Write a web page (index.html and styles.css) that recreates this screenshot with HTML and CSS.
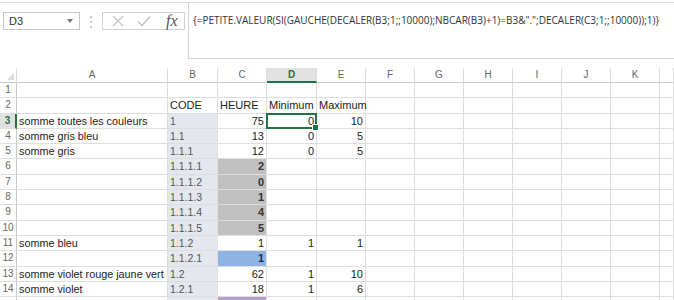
FILE: index.html
```html
<!DOCTYPE html>
<html lang="fr">
<head>
<meta charset="utf-8">
<link rel="stylesheet" href="styles.css">
</head>
<body>
<div class="topbar">
  <div class="namebox"><span>D3</span><span class="arrow"></span></div>
  <div class="dots"><i></i><i></i><i></i></div>
  <div class="buttons">
    <svg class="ico" width="12" height="12" viewBox="0 0 12 12"><path d="M1 1L11 11M11 1L1 11" stroke="#c4c4c4" stroke-width="1.3" fill="none"/></svg>
    <svg class="ico" width="14" height="12" viewBox="0 0 14 12"><path d="M1 6.5L5 10.5L13 1.5" stroke="#c4c4c4" stroke-width="1.6" fill="none"/></svg>
    <span class="fx">fx</span>
  </div>
  <div class="formula">{=PETITE.VALEUR(SI(GAUCHE(DECALER(B3;1;;10000);NBCAR(B3)+1)=B3&amp;".";DECALER(C3;1;;10000));1)}</div>
</div>
<div class="sheet">
  <div class="hd corner"></div><div class="hd">A</div><div class="hd">B</div><div class="hd">C</div><div class="hd sel">D</div><div class="hd">E</div><div class="hd">F</div><div class="hd">G</div><div class="hd">H</div><div class="hd">I</div><div class="hd">J</div><div class="hd">K</div><div class="hd"></div>

  <div class="rh">1</div><div class="c"></div><div class="c"></div><div class="c"></div><div class="c"></div><div class="c"></div><div class="c"></div><div class="c"></div><div class="c"></div><div class="c"></div><div class="c"></div><div class="c"></div><div class="c"></div>

  <div class="rh">2</div><div class="c"></div><div class="c">CODE</div><div class="c">HEURE</div><div class="c">Minimum</div><div class="c">Maximum</div><div class="c"></div><div class="c"></div><div class="c"></div><div class="c"></div><div class="c"></div><div class="c"></div><div class="c"></div>

  <div class="rh sel">3</div><div class="c">somme toutes les couleurs</div><div class="c code">1</div><div class="c n">75</div><div class="c n active">0</div><div class="c n">10</div><div class="c"></div><div class="c"></div><div class="c"></div><div class="c"></div><div class="c"></div><div class="c"></div><div class="c"></div>

  <div class="rh">4</div><div class="c">somme gris bleu</div><div class="c code">1.1</div><div class="c n">13</div><div class="c n">0</div><div class="c n">5</div><div class="c"></div><div class="c"></div><div class="c"></div><div class="c"></div><div class="c"></div><div class="c"></div><div class="c"></div>

  <div class="rh">5</div><div class="c">somme gris</div><div class="c code">1.1.1</div><div class="c n">12</div><div class="c n">0</div><div class="c n">5</div><div class="c"></div><div class="c"></div><div class="c"></div><div class="c"></div><div class="c"></div><div class="c"></div><div class="c"></div>

  <div class="rh">6</div><div class="c"></div><div class="c code">1.1.1.1</div><div class="c n gray">2</div><div class="c"></div><div class="c"></div><div class="c"></div><div class="c"></div><div class="c"></div><div class="c"></div><div class="c"></div><div class="c"></div><div class="c"></div>

  <div class="rh">7</div><div class="c"></div><div class="c code">1.1.1.2</div><div class="c n gray">0</div><div class="c"></div><div class="c"></div><div class="c"></div><div class="c"></div><div class="c"></div><div class="c"></div><div class="c"></div><div class="c"></div><div class="c"></div>

  <div class="rh">8</div><div class="c"></div><div class="c code">1.1.1.3</div><div class="c n gray">1</div><div class="c"></div><div class="c"></div><div class="c"></div><div class="c"></div><div class="c"></div><div class="c"></div><div class="c"></div><div class="c"></div><div class="c"></div>

  <div class="rh">9</div><div class="c"></div><div class="c code">1.1.1.4</div><div class="c n gray">4</div><div class="c"></div><div class="c"></div><div class="c"></div><div class="c"></div><div class="c"></div><div class="c"></div><div class="c"></div><div class="c"></div><div class="c"></div>

  <div class="rh">10</div><div class="c"></div><div class="c code">1.1.1.5</div><div class="c n gray">5</div><div class="c"></div><div class="c"></div><div class="c"></div><div class="c"></div><div class="c"></div><div class="c"></div><div class="c"></div><div class="c"></div><div class="c"></div>

  <div class="rh">11</div><div class="c">somme bleu</div><div class="c code">1.1.2</div><div class="c n">1</div><div class="c n">1</div><div class="c n">1</div><div class="c"></div><div class="c"></div><div class="c"></div><div class="c"></div><div class="c"></div><div class="c"></div><div class="c"></div>

  <div class="rh">12</div><div class="c"></div><div class="c code">1.1.2.1</div><div class="c n blue">1</div><div class="c"></div><div class="c"></div><div class="c"></div><div class="c"></div><div class="c"></div><div class="c"></div><div class="c"></div><div class="c"></div><div class="c"></div>

  <div class="rh">13</div><div class="c">somme violet rouge jaune vert</div><div class="c code">1.2</div><div class="c n">62</div><div class="c n">1</div><div class="c n">10</div><div class="c"></div><div class="c"></div><div class="c"></div><div class="c"></div><div class="c"></div><div class="c"></div><div class="c"></div>

  <div class="rh">14</div><div class="c">somme violet</div><div class="c code">1.2.1</div><div class="c n">18</div><div class="c n">1</div><div class="c n">6</div><div class="c"></div><div class="c"></div><div class="c"></div><div class="c"></div><div class="c"></div><div class="c"></div><div class="c"></div>

  <div class="rh"></div><div class="c"></div><div class="c code"></div><div class="c n purple"></div><div class="c"></div><div class="c"></div><div class="c"></div><div class="c"></div><div class="c"></div><div class="c"></div><div class="c"></div><div class="c"></div><div class="c"></div>
</div>
</body>
</html>
```

FILE: styles.css
```css
html, body {
  margin: 0;
  padding: 0;
  background: #fff;
  overflow: hidden;
  width: 674px;
  height: 300px;
}
body {
  font-family: "Liberation Sans", Arial, sans-serif;
  color: #222;
}
.topbar {
  margin-top: 2px;
  border-top: 1px solid #dadada;
  height: 57px;
  display: flex;
  align-items: flex-start;
}
.namebox {
  margin: 9px 0 0 3px;
  width: 77px;
  height: 18px;
  box-sizing: border-box;
  border: 1px solid #c8c8c8;
  display: flex;
  align-items: center;
  justify-content: space-between;
  padding: 0 6px 0 5px;
  font-size: 11px;
  color: #333;
}
.arrow {
  width: 0;
  height: 0;
  border-left: 3px solid transparent;
  border-right: 3px solid transparent;
  border-top: 4px solid #777;
}
.dots {
  margin: 13px 0 0 10px;
  width: 3px;
  display: flex;
  flex-direction: column;
  gap: 3px;
}
.dots i {
  display: block;
  width: 2px;
  height: 2px;
  background: #c9c9c9;
}
.buttons {
  margin: 9px 0 0 9px;
  width: 83px;
  height: 18px;
  box-sizing: border-box;
  border: 1px solid #d0d0d0;
  display: flex;
  align-items: center;
  padding: 0 0 0 9px;
  gap: 13px;
}
.fx {
  font-family: "Liberation Serif", serif;
  font-style: italic;
  font-size: 16px;
  color: #555;
  margin-left: 2px;
  line-height: 1;
}
.formula {
  margin-left: 3px;
  flex: 1;
  height: 56px;
  border-left: 1px solid #d2d2d2;
  border-bottom: 1px solid #d2d2d2;
  padding: 10px 0 0 4px;
  box-sizing: border-box;
  font-family: "Open Sans", sans-serif;
  font-size: 10px;
  color: #333;
  white-space: nowrap;
  overflow: hidden;
}
.sheet {
  margin-top: 8px;
  display: grid;
  grid-template-columns: 17px 151px 50px 49px 50px 49px 49px 49px 49px 49px 49px 49px 14px;
  grid-template-rows: 15px;
  grid-auto-rows: 15.3px;
  font-size: 11px;
}
.sheet > div {
  box-sizing: border-box;
  border-right: 1px solid #dedede;
  border-bottom: 1px solid #dedede;
  white-space: nowrap;
  line-height: 14px;
  overflow: visible;
}
.hd {
  text-align: center;
  color: #666;
  font-size: 10px;
  border-bottom-color: #c8c8c8 !important;
}
.hd.sel {
  background: #e1e1e1;
  color: #217346;
  font-weight: bold;
  border-bottom: 2px solid #217346 !important;
}
.corner {
  position: relative;
}
.corner::after {
  content: "";
  position: absolute;
  right: 2px;
  bottom: 2px;
  border-left: 7px solid transparent;
  border-bottom: 7px solid #dcdcdc;
}
.rh {
  text-align: center;
  color: #666;
  font-size: 10px;
  border-right-color: #c8c8c8 !important;
}
.rh.sel {
  background: #e1e1e1;
  color: #217346;
  font-weight: bold;
  border-right: 2px solid #217346 !important;
}
.c {
  padding: 0 2px;
  position: relative;
}
.c.n {
  text-align: right;
}
.label {
  letter-spacing: -0.1px;
}
.code {
  background: #e4e8ee;
  color: #555;
  font-size: 10.5px;
}
.gray {
  background: #c0c0c0;
  font-weight: bold;
  color: #333;
}
.blue {
  background: #8db4e2;
  font-weight: bold;
  color: #1f2f4a;
}
.purple {
  background: #b1a0c7;
}
.active {
  z-index: 1;
}
.active::before {
  content: "";
  position: absolute;
  left: -1px;
  top: -1px;
  right: -1px;
  bottom: -1px;
  border: 2px solid #217346;
}
.active::after {
  content: "";
  position: absolute;
  right: -3px;
  bottom: -3px;
  width: 5px;
  height: 5px;
  background: #217346;
  border: 1px solid #fff;
}
.sheet > .c:nth-child(13n+2) {
  font-size: 10.8px;
}
```
